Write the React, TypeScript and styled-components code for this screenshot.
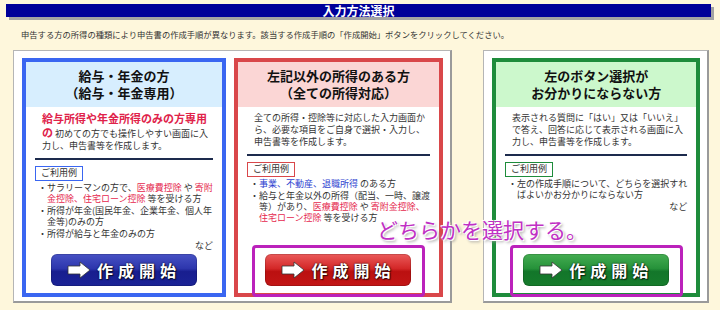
import styled, { createGlobalStyle, css } from "styled-components";

const GlobalStyle = createGlobalStyle`
  body {
    margin: 0;
    background: #fef7dc;
    font-family: "Noto Sans CJK JP", "Noto Sans", sans-serif;
  }
`;

type Tone = "blue" | "red" | "green";

const tones = {
  blue: {
    border: "#3a66f1",
    head: "#d7eefe",
    button: "linear-gradient(#4752c4 0%, #2d36ad 45%, #181e8f 55%, #1b2396 100%)",
  },
  red: {
    border: "#d9474a",
    head: "#fbd6d5",
    button: "linear-gradient(#ea5a5a 0%, #d42828 45%, #bb1010 55%, #c21616 100%)",
  },
  green: {
    border: "#1e8c3b",
    head: "#ccf8cc",
    button: "linear-gradient(#45ad52 0%, #26923a 45%, #13762a 55%, #167c2c 100%)",
  },
};

const Page = styled.div`
  position: relative;
  width: 720px;
  height: 310px;
  overflow: hidden;
  background: #fef7dc;
  color: #333;
`;

const TitleBar = styled.div`
  margin: 4px 9px 0 6px;
  height: 13px;
  background: #000099;
  box-shadow: 3px 3px 0 #a3a3a3;
  color: #fff;
  font-size: 12px;
  font-weight: 700;
  line-height: 13px;
  text-align: center;
`;

const Lead = styled.p`
  margin: 11px 0 0;
  padding-left: 21px;
  font-size: 8.3px;
  line-height: 12px;
  white-space: nowrap;
`;

const Panels = styled.div`
  display: flex;
  gap: 31px;
  margin-top: 10px;
  padding-left: 13px;
`;

const Frame = styled.div<{ $width: number }>`
  box-sizing: border-box;
  display: flex;
  gap: 8px;
  width: ${({ $width }) => $width}px;
  height: 253px;
  padding: 7px 7px 4px 8px;
  background: #fff;
  border: 1px solid #b5b5b5;
  border-right: 2px solid #9a9a9a;
  border-bottom: 2px solid #9a9a9a;
`;

const Card = styled.div<{ $tone: Tone }>`
  box-sizing: border-box;
  flex: 1;
  display: flex;
  flex-direction: column;
  border: 4px solid ${({ $tone }) => tones[$tone].border};
  background: #fff;
`;

const CardHead = styled.div<{ $tone: Tone }>`
  padding: 5px 0 6px;
  background: ${({ $tone }) => tones[$tone].head};
  text-align: center;
`;

const CardTitle = styled.h2`
  margin: 0;
  font-size: 13px;
  font-weight: 700;
  line-height: 17px;
  color: #111;
`;

const CardBody = styled.div`
  flex: 1;
  display: flex;
  flex-direction: column;
  padding: 5px 9px 7px;
`;

const Intro = styled.p`
  margin: 0;
  padding-left: 7px;
  font-size: 9px;
  line-height: 12px;
  white-space: nowrap;
`;

const Lead2 = styled.strong`
  color: #e0224a;
  font-size: 11px;
  font-weight: 700;
  line-height: 12px;
`;

const Rule = styled.hr`
  margin: 6px 0 0;
  border: 0;
  height: 2px;
  background: #1d2b4d;
`;

const Tag = styled.span<{ $tone: Tone }>`
  align-self: flex-start;
  box-sizing: border-box;
  margin-top: 6px;
  height: 15px;
  padding: 0 5px;
  border: 1.5px solid ${({ $tone }) => tones[$tone].border};
  font-size: 9px;
  line-height: 12px;
`;

const Examples = styled.ul`
  margin: 1px 0 0;
  padding: 0 0 0 3px;
  list-style: none;
`;

const Example = styled.li`
  display: flex;
  margin-bottom: 1px;
  font-size: 9px;
  line-height: 11px;
  white-space: nowrap;

  &::before {
    content: "・";
    flex: none;
    width: 9px;
  }
`;

const Hi = styled.span<{ $c: "red" | "blue" }>`
  color: ${({ $c }) => ($c === "red" ? "#e5284e" : "#2e3fd0")};
`;

const Etc = styled.div`
  margin-top: 0;
  text-align: right;
  font-size: 9px;
  line-height: 11px;
`;

const ButtonArea = styled.div`
  margin-top: auto;
  display: flex;
  justify-content: center;
`;

const Highlight = styled.div<{ $on?: boolean }>`
  position: relative;
  ${({ $on }) =>
    $on &&
    css`
      &::after {
        content: "";
        position: absolute;
        inset: -9px -14px -11px -13px;
        border: 3px solid #bb22bb;
        border-radius: 4px;
        z-index: 2;
      }
    `}
`;

const StartButton = styled.button<{ $tone: Tone }>`
  display: flex;
  align-items: center;
  gap: 6px;
  width: 146px;
  height: 32px;
  padding: 0 0 0 16px;
  border: 0;
  border-radius: 6px;
  background: ${({ $tone }) => tones[$tone].button};
  box-shadow: inset 0 0 0 1px rgba(0, 0, 0, 0.15);
  color: #fff;
  font-family: "Noto Sans CJK JP", sans-serif;
  font-size: 16px;
  font-weight: 700;
  letter-spacing: 5px;
  text-shadow: 0 0 2px #000, 1px 1px 1px rgba(0, 0, 0, 0.6);
  cursor: pointer;
`;

const Callout = styled.div`
  position: absolute;
  left: 377px;
  top: 216px;
  z-index: 3;
  color: #c030c4;
  font-size: 21px;
  line-height: 26px;
  white-space: nowrap;
  text-shadow: 0 0 2px #fff, 1px 1px 0 #fff, -1px -1px 0 #fff, 2px 2px 3px #999;
`;

const Arrow = () => (
  <svg width="24" height="18" viewBox="0 0 24 18">
    <path
      d="M1 5 H13 V1 L23 9 L13 17 V13 H1 Z"
      fill="#fff"
      stroke="#333"
      strokeWidth="0.8"
    />
  </svg>
);

const Start = ({ tone, marked }: { tone: Tone; marked?: boolean }) => (
  <ButtonArea>
    <Highlight $on={marked}>
      <StartButton $tone={tone}>
        <Arrow />
        作成開始
      </StartButton>
    </Highlight>
  </ButtonArea>
);

export default function App() {
  return (
    <Page>
      <GlobalStyle />
      <TitleBar>入力方法選択</TitleBar>
      <Lead>
        申告する方の所得の種類により申告書の作成手順が異なります。該当する作成手順の「作成開始」ボタンをクリックしてください。
      </Lead>

      <Panels>
        <Frame $width={439}>
          <Card $tone="blue">
            <CardHead $tone="blue">
              <CardTitle>
                給与・年金の方
                <br />
                （給与・年金専用）
              </CardTitle>
            </CardHead>
            <CardBody>
              <Intro>
                <Lead2>給与所得や年金所得のみの方専用</Lead2>
                <br />
                <Lead2>の</Lead2> 初めての方でも操作しやすい画面に入
                <br />
                力し、申告書等を作成します。
              </Intro>
              <Rule />
              <Tag $tone="blue">ご利用例</Tag>
              <Examples>
                <Example>
                  <span>
                    サラリーマンの方で、<Hi $c="red">医療費控除</Hi> や <Hi $c="red">寄附</Hi>
                    <br />
                    <Hi $c="red">金控除、住宅ローン控除</Hi> 等を受ける方
                  </span>
                </Example>
                <Example>
                  <span>
                    所得が年金(国民年金、企業年金、個人年
                    <br />
                    金等)のみの方
                  </span>
                </Example>
                <Example>
                  <span>所得が給与と年金のみの方</span>
                </Example>
              </Examples>
              <Etc>など</Etc>
              <Start tone="blue" />
            </CardBody>
          </Card>

          <Card $tone="red">
            <CardHead $tone="red">
              <CardTitle>
                左記以外の所得のある方
                <br />
                （全ての所得対応）
              </CardTitle>
            </CardHead>
            <CardBody>
              <Intro>
                全ての所得・控除等に対応した入力画面か
                <br />
                ら、必要な項目をご自身で選択・入力し、
                <br />
                申告書等を作成します。
              </Intro>
              <Rule />
              <Tag $tone="red">ご利用例</Tag>
              <Examples>
                <Example>
                  <span>
                    <Hi $c="blue">事業、不動産、退職所得</Hi> のある方
                  </span>
                </Example>
                <Example>
                  <span>
                    給与と年金以外の所得（配当、一時、譲渡
                    <br />
                    等）があり、<Hi $c="red">医療費控除</Hi> や <Hi $c="red">寄附金控除、</Hi>
                    <br />
                    <Hi $c="red">住宅ローン控除</Hi> 等を受ける方
                  </span>
                </Example>
              </Examples>
              <Start tone="red" marked />
            </CardBody>
          </Card>
        </Frame>

        <Frame $width={226}>
          <Card $tone="green">
            <CardHead $tone="green">
              <CardTitle>
                左のボタン選択が
                <br />
                お分かりにならない方
              </CardTitle>
            </CardHead>
            <CardBody>
              <Intro>
                表示される質問に「はい」又は「いいえ」
                <br />
                で答え、回答に応じて表示される画面に入
                <br />
                力し、申告書等を作成します。
              </Intro>
              <Rule />
              <Tag $tone="green">ご利用例</Tag>
              <Examples>
                <Example>
                  <span>
                    左の作成手順について、どちらを選択すれ
                    <br />
                    ばよいかお分かりにならない方
                  </span>
                </Example>
              </Examples>
              <Etc>など</Etc>
              <Start tone="green" marked />
            </CardBody>
          </Card>
        </Frame>
      </Panels>

      <Callout>どちらかを選択する。</Callout>
    </Page>
  );
}
